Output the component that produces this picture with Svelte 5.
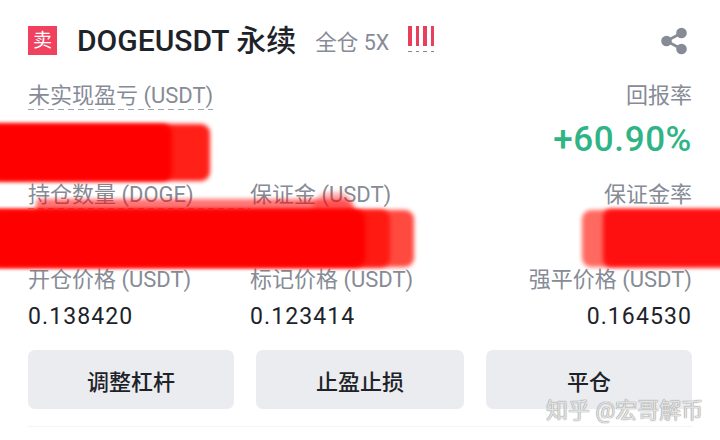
<script>
  const levels = [0, 1, 2, 3]
  const buttons = ['调整杠杆', '止盈止损', '平仓']
  // the middle values of the grid are hidden by these smears
  const smears = ['a', 'b', 'c', 'g', 'd', 'e', 'f']
</script>

<main class="card">
  <header class="head">
    <span class="side">卖</span>
    <h1>DOGEUSDT 永续</h1>
    <span class="mode">全仓 5X</span>
    <span class="risk">
      {#each levels as l (l)}
        <i></i>
      {/each}
    </span>
    <svg class="share" viewBox="0 0 28 28" width="28" height="28" aria-hidden="true">
      <path d="M21.5 6 6.5 14l15 8" fill="none" stroke="#868b96" stroke-width="2.6" />
      <circle cx="21.5" cy="6" r="5.3" fill="#868b96" />
      <circle cx="6.5" cy="14" r="5.3" fill="#868b96" />
      <circle cx="21.5" cy="22" r="5.3" fill="#868b96" />
    </svg>
  </header>

  <section class="pnl">
    <div class="row-top">
      <span class="label dashed">未实现盈亏 (USDT)</span>
      <span class="label">回报率</span>
    </div>
    <div class="roe">+60.90%</div>
  </section>

  <section class="grid">
    <span class="label dashed">持仓数量 (DOGE)</span>
    <span class="label">保证金 (USDT)</span>
    <span class="label end">保证金率</span>
    <span class="hidden-value"></span>
    <span class="hidden-value"></span>
    <span class="hidden-value"></span>
    <span class="label">开仓价格 (USDT)</span>
    <span class="label">标记价格 (USDT)</span>
    <span class="label end">强平价格 (USDT)</span>
    <span class="value">0.138420</span>
    <span class="value">0.123414</span>
    <span class="value end">0.164530</span>
  </section>

  <div class="actions">
    {#each buttons as b (b)}
      <button type="button">{b}</button>
    {/each}
  </div>
  <hr />

  {#each smears as s (s)}
    <div class="smear {s}"></div>
  {/each}
  <div class="watermark">知乎 @宏哥解币</div>
</main>

<style>
  :global(body) {
    margin: 0;
    background: #fff;
  }

  .card {
    position: relative;
    width: 720px;
    height: 440px;
    box-sizing: border-box;
    padding: 25px 28px 0;
    overflow: hidden;
    font-family: Roboto, "Noto Sans CJK SC", sans-serif;
    color: #1e2329;
  }

  .head {
    display: flex;
    align-items: center;
    height: 30px;
  }

  .side {
    width: 29px;
    height: 29px;
    margin-top: 1px;
    display: flex;
    align-items: center;
    justify-content: center;
    background: #f0415f;
    color: #fff;
    font-size: 19px;
    line-height: 1;
  }

  h1 {
    margin: 2px 0 0 20px;
    font-size: 30px;
    font-weight: 500;
    line-height: 30px;
    white-space: nowrap;
  }

  .mode {
    margin: 0 0 0 19px;
    font-size: 21.5px;
    color: #868b96;
    white-space: nowrap;
  }

  .risk {
    margin-left: 19px;
    margin-top: 1px;
    align-self: flex-start;
    display: flex;
    gap: 4px;
  }

  .risk i {
    display: block;
    width: 3.5px;
    height: 20px;
    background: #e6405a;
    position: relative;
  }

  .risk i::after {
    content: '';
    position: absolute;
    left: 0;
    bottom: -6px;
    width: 3.5px;
    height: 1px;
    background: #888;
  }

  .share {
    margin-left: auto;
    margin-right: 4px;
    margin-top: 2px;
  }

  .pnl {
    margin-top: 27px;
  }

  .row-top {
    display: flex;
    justify-content: space-between;
  }

  .label {
    font-size: 22px;
    line-height: 28px;
    color: #868b96;
    white-space: nowrap;
  }

  .dashed {
    background: repeating-linear-gradient(to right, #a2a5ab 0 6px, transparent 6px 10px) left bottom / 100% 1px no-repeat;
  }

  .roe {
    margin-top: 10px;
    text-align: right;
    font-size: 35px;
    font-weight: 500;
    line-height: 40px;
    letter-spacing: 0.6px;
    color: #2fb585;
  }

  .grid {
    margin-top: 21px;
    display: grid;
    grid-template-columns: 222px 1fr auto;
    grid-template-rows: 28px 57px 28px 43px;
  }

  .end {
    justify-self: end;
  }

  .value {
    margin-top: 3px;
    font-size: 23px;
    line-height: 40px;
    letter-spacing: 1.1px;
    color: #1e2329;
  }

  .actions {
    margin-top: 13px;
    display: grid;
    grid-template-columns: 206px 208px 206px;
    justify-content: space-between;
  }

  button {
    height: 59px;
    border: 0;
    border-radius: 7px;
    background: #eaecef;
    font-family: inherit;
    font-size: 22px;
    font-weight: 500;
    color: #1e2329;
    padding: 0;
  }

  hr {
    margin: 17px 0 0;
    border: 0;
    height: 1px;
    background: #f3f4f5;
  }

  /* red paint over the hidden figures */
  .smear {
    position: absolute;
    background: #ff0000;
    filter: blur(2px);
  }

  .a { left: -10px; top: 124px; width: 220px; height: 57px; border-radius: 9px; background: #ff2018; }
  .b { left: -10px; top: 124px; width: 182px; height: 57px; border-radius: 9px; }
  .c { left: -10px; top: 210px; width: 424px; height: 57px; border-radius: 9px; background: #ff4a40; }
  .g { left: -10px; top: 210px; width: 400px; height: 57px; border-radius: 9px; background: #ff1a12; }
  .d { left: -10px; top: 210px; width: 375px; height: 57px; border-radius: 9px; }
  .e { left: 582px; top: 210px; width: 150px; height: 57px; border-radius: 9px; background: #ff6a60; }
  .f { left: 603px; top: 209px; width: 130px; height: 58px; border-radius: 8px; background: #ff1010; }

  /* thinner first stroke, the labels show through it */
  .d::before {
    content: '';
    position: absolute;
    left: 46px;
    right: 10px;
    top: -11px;
    height: 14px;
    border-radius: 8px 26px 0 0;
    background: rgba(255, 0, 0, 0.55);
  }

  .d::after {
    content: '';
    position: absolute;
    right: 10px;
    top: -18px;
    width: 42px;
    height: 18px;
    border-radius: 20px 22px 0 0;
    background: rgba(255, 0, 0, 0.3);
  }

  .watermark {
    position: absolute;
    left: 546px;
    top: 398px;
    font-size: 22px;
    line-height: 26px;
    white-space: nowrap;
    color: rgba(255, 255, 255, 0.75);
    text-shadow: 0 0 1px #8a8a8a, 0 0 1px #8a8a8a;
  }
</style>
